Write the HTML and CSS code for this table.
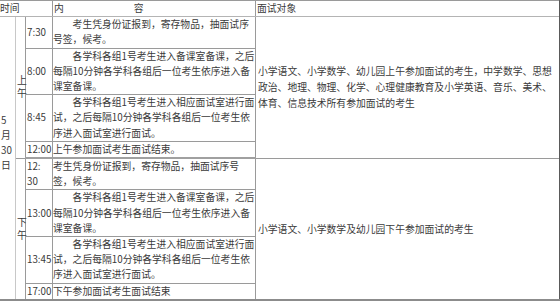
FILE: index.html
```html
<!DOCTYPE html>
<html lang="zh-CN">
<head>
<meta charset="utf-8">
<title>面试时间安排</title>
<link rel="stylesheet" href="styles.css">
</head>
<body>
<table class="schedule">
  <colgroup>
    <col class="c-date">
    <col class="c-half">
    <col class="c-time">
    <col class="c-content">
    <col class="c-target">
  </colgroup>
  <thead>
    <tr>
      <th colspan="3" class="h-time">时间</th>
      <th class="h-content">内容</th>
      <th class="h-target">面试对象</th>
    </tr>
  </thead>
  <tbody>
    <tr>
      <td rowspan="8" class="date">5<br>月<br>30<br>日</td>
      <td rowspan="4" class="half">上<br>午</td>
      <td class="time">7:30</td>
      <td class="content indent">考生凭身份证报到，寄存物品，抽面试序<br>号签，候考。</td>
      <td rowspan="4" class="target">小学语文、小学数学、幼儿园上午参加面试的考生，中学数学、思想<br>政治、地理、物理、化学、心理健康教育及小学英语、音乐、美术、<br>体育、信息技术所有参加面试的考生</td>
    </tr>
    <tr>
      <td class="time">8:00</td>
      <td class="content indent">各学科各组1号考生进入备课室备课，之后<br>每隔10分钟各学科各组后一位考生依序进入备<br>课室备课。</td>
    </tr>
    <tr>
      <td class="time">8:45</td>
      <td class="content indent">各学科各组1号考生进入相应面试室进行面<br>试，之后每隔10分钟各学科各组后一位考生依<br>序进入面试室进行面试。</td>
    </tr>
    <tr class="end-row">
      <td class="time">12:00</td>
      <td class="content">上午参加面试考生面试结束。</td>
    </tr>
    <tr>
      <td rowspan="4" class="half">下<br>午</td>
      <td class="time">12:<br>30</td>
      <td class="content">考生凭身份证报到，寄存物品，抽面试序号<br>签，候考。</td>
      <td rowspan="4" class="target">小学语文、小学数学及幼儿园下午参加面试的考生</td>
    </tr>
    <tr>
      <td class="time">13:00</td>
      <td class="content indent">各学科各组1号考生进入备课室备课，之后<br>每隔10分钟各学科各组后一位考生依序进入备<br>课室备课。</td>
    </tr>
    <tr>
      <td class="time">13:45</td>
      <td class="content indent">各学科各组1号考生进入相应面试室进行面<br>试，之后每隔10分钟各学科各组后一位考生依<br>序进入面试室进行面试。</td>
    </tr>
    <tr>
      <td class="time">17:00</td>
      <td class="content">下午参加面试考生面试结束</td>
    </tr>
  </tbody>
</table>
</body>
</html>
```

FILE: styles.css
```css
html, body {
  margin: 0;
  padding: 0;
  background: #ffffff;
}

.schedule {
  margin-left: -2px;
  border-collapse: collapse;
  table-layout: fixed;
  width: 561px;
  font-family: "Noto Sans CJK SC", "Microsoft YaHei", sans-serif;
  font-size: 9.8px;
  line-height: 15.2px;
  color: #3a3a3a;
  border-top: 1px solid #b4b4b4;
  border-right: 2px solid #5a5a5a;
  border-bottom: 2px solid #8c8c8c;
}

.c-date { width: 17px; }
.c-half { width: 10px; }
.c-time { width: 27px; }
.c-content { width: 203px; }
.c-target { width: 304px; }

.schedule th,
.schedule td {
  border: 1px solid #9a9a9a;
  padding: 0 1px;
  vertical-align: middle;
  text-align: left;
  font-weight: normal;
  white-space: nowrap;
  overflow: visible;
}

.schedule th {
  border-bottom-color: #b4b4b4;
}

.h-content {
  letter-spacing: 70px;
}

.schedule td.date {
  border-right-color: #c8c8c8;
  padding: 0 0 30px 2px;
}

.schedule td.half {
  padding: 0 0 0 1px;
  line-height: 13px;
}

.schedule td.time {
  padding: 0 0 0 1px;
}

.schedule td.content {
  padding: 0 1px 0 0;
}

.indent {
  text-indent: 2em;
}

.schedule td.target {
  padding: 0 2px;
  line-height: 16px;
}

.end-row td {
  border-bottom: 2px solid #a0a0a0;
}
```
